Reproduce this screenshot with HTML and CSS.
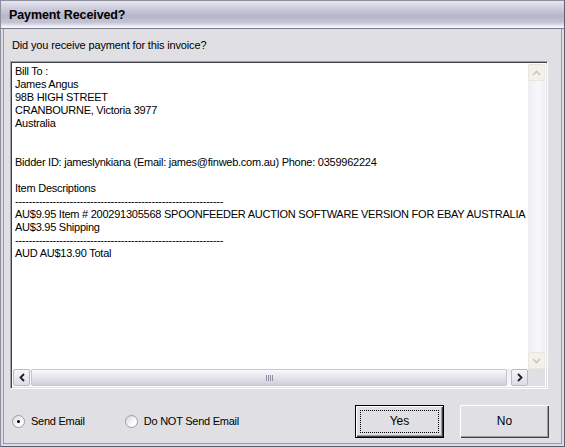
FILE: index.html
```html
<!DOCTYPE html>
<html lang="en">
<head>
    <meta charset="UTF-8">
    <title>Payment Received?</title>
    <link rel="stylesheet" href="styles.css">
</head>
<body>
    <div class="window">
        <div class="titlebar">Payment Received?</div>

        <div class="content">
            <div class="prompt">Did you receive payment for this invoice?</div>

            <div class="textbox">
                <div class="text-area">
<pre>Bill To :
James Angus
98B HIGH STREET
CRANBOURNE, Victoria 3977
Australia


Bidder ID: jameslynkiana (Email: james@finweb.com.au) Phone: 0359962224

Item Descriptions
-------------------------------------------------------------
AU$9.95 Item # 200291305568 SPOONFEEDER AUCTION SOFTWARE VERSION FOR EBAY AUSTRALIA
AU$3.95 Shipping
-------------------------------------------------------------
AUD AU$13.90 Total</pre>
                </div>

                <div class="vscroll">
                    <div class="sb-btn disabled">
                        <svg width="9" height="6" viewBox="0 0 9 6"><path d="M1 5 L4.5 1.5 L8 5" fill="none" stroke="#c9c8c0" stroke-width="1.6"/></svg>
                    </div>
                    <div class="vtrack"></div>
                    <div class="sb-btn disabled">
                        <svg width="9" height="6" viewBox="0 0 9 6"><path d="M1 1 L4.5 4.5 L8 1" fill="none" stroke="#c9c8c0" stroke-width="1.6"/></svg>
                    </div>
                </div>

                <div class="hscroll">
                    <div class="sb-btn">
                        <svg width="6" height="9" viewBox="0 0 6 9"><path d="M5 1 L1.5 4.5 L5 8" fill="none" stroke="#1c1c24" stroke-width="1.8"/></svg>
                    </div>
                    <div class="hthumb"><span class="grip"></span></div>
                    <div class="sb-btn">
                        <svg width="6" height="9" viewBox="0 0 6 9"><path d="M1 1 L4.5 4.5 L1 8" fill="none" stroke="#1c1c24" stroke-width="1.8"/></svg>
                    </div>
                </div>

                <div class="corner"></div>
            </div>

            <div class="footer">
                <label class="option">
                    <span class="radio checked"></span>
                    Send Email
                </label>
                <label class="option second">
                    <span class="radio"></span>
                    Do NOT Send Email
                </label>

                <div class="actions">
                    <button class="btn default"><span class="focus">Yes</span></button>
                    <button class="btn">No</button>
                </div>
            </div>
        </div>
    </div>
</body>
</html>
```

FILE: styles.css
```css
body {
    margin: 0;
    background: #e0dfe3;
    font-family: "Liberation Sans", Arial, sans-serif;
    font-size: 11px;
    color: #000;
}

.window {
    width: 565px;
    height: 447px;
    box-sizing: border-box;
    border: 1px solid #8d8d9c;
    border-right-color: #5f5f6e;
    border-bottom-color: #5f5f6e;
    background: #dcdce6;
    padding: 0 2px 2px 2px;
    display: flex;
    flex-direction: column;
}

.titlebar {
    height: 27px;
    margin: 0 -2px;
    padding-left: 8px;
    display: flex;
    align-items: center;
    font-size: 12.5px;
    letter-spacing: -0.1px;
    font-weight: bold;
    color: #000;
    background: linear-gradient(to bottom,
        #e6e6ef 0%,
        #cfcfdf 25%,
        #b6b6ca 55%,
        #c4c4d6 80%,
        #eeeef4 93%,
        #f6f6fa 100%);
    border-bottom: 1px solid #7a7a8a;
}

.content {
    flex: 1;
    background: #e0dfe3;
    border: 1px solid #9b9ba8;
    border-top: none;
    display: flex;
    flex-direction: column;
}

.prompt {
    height: 32px;
    line-height: 32px;
    padding-left: 8px;
    letter-spacing: -0.15px;
}

/* sunken text box */
.textbox {
    margin: 0 13px 0 6px;
    height: 328px;
    box-sizing: border-box;
    border-top: 1px solid #a0a0a8;
    border-left: 1px solid #a0a0a8;
    border-right: 1px solid #ffffff;
    border-bottom: 1px solid #ffffff;
    box-shadow: inset 1px 1px 0 #404048, inset -1px -1px 0 #e0dfe3;
    padding: 2px;
    background: #fff;
    display: grid;
    grid-template-columns: 1fr 17px;
    grid-template-rows: 1fr 17px;
}

.text-area {
    overflow: hidden;
    padding: 1px 0 0 2px;
}

.text-area pre {
    margin: 0;
    font-family: inherit;
    font-size: 11px;
    line-height: 13px;
    letter-spacing: -0.25px;
}

.vscroll {
    display: flex;
    flex-direction: column;
    background: linear-gradient(to right, #eeeff4, #f8f8fb 60%, #eeeef3);
}

.vtrack {
    flex: 1;
}

.sb-btn {
    width: 17px;
    height: 17px;
    box-sizing: border-box;
    border: 1px solid #b9b9c9;
    border-radius: 2px;
    background: linear-gradient(to bottom, #f6f6f9, #dcdce6);
    display: flex;
    align-items: center;
    justify-content: center;
}

.sb-btn.disabled {
    border-color: #e8e7df;
    background: #f2f1ea;
}

.hscroll {
    display: flex;
    background: linear-gradient(to bottom, #eeeef2, #f8f8fb);
}

.hthumb {
    flex: 1;
    margin: 0 4px 0 1px;
    border: 1px solid #c5c5d3;
    border-radius: 2px;
    background: linear-gradient(to bottom, #fafafc 0%, #e6e6ee 45%, #cfcfdc 100%);
    display: flex;
    align-items: center;
    justify-content: center;
}

.grip {
    width: 7px;
    height: 6px;
    background: repeating-linear-gradient(to right, #8e8ea4 0, #8e8ea4 1px, transparent 1px, transparent 2px);
}

.corner {
    background: #e0dfe3;
}

/* bottom row */
.footer {
    flex: 1;
    display: flex;
    align-items: center;
    padding: 10px 12px 0 8px;
    letter-spacing: -0.25px;
}

.option {
    display: flex;
    align-items: center;
    gap: 6px;
}

.option.second {
    margin-left: 40px;
}

.radio {
    width: 11px;
    height: 11px;
    border-radius: 50%;
    border: 1px solid #9d9da8;
    background: linear-gradient(135deg, #d8d8dc, #ffffff 70%);
    position: relative;
}

.radio.checked::after {
    content: "";
    position: absolute;
    left: 4px;
    top: 4px;
    width: 3px;
    height: 3px;
    border-radius: 50%;
    background: #000;
}

.actions {
    margin-left: auto;
    display: flex;
    gap: 16px;
}

.btn {
    width: 89px;
    height: 33px;
    padding: 0;
    font-family: inherit;
    font-size: 12px;
    background: #e0dfe3;
    border: none;
    box-shadow: inset 1px 1px 0 #ffffff, inset -1px -1px 0 #404040, inset -2px -2px 0 #9d9da1;
    display: flex;
    align-items: center;
    justify-content: center;
}

.btn.default {
    border: 1px solid #000;
    padding: 4px;
}

.focus {
    flex: 1;
    align-self: stretch;
    border: 1px dotted #000;
    display: flex;
    align-items: center;
    justify-content: center;
}
```
